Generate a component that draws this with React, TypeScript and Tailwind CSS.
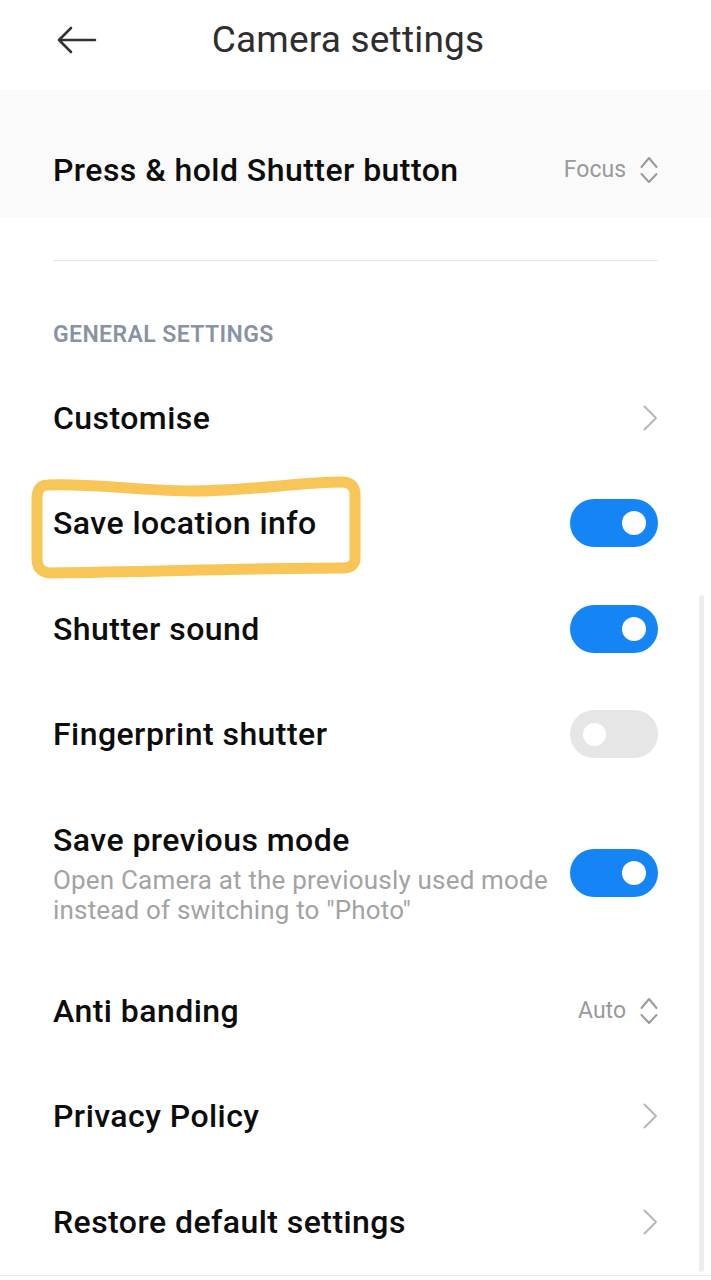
import React from "react";

const font = { fontFamily: "Roboto, 'Noto Sans', sans-serif" };

function Toggle({ on }: { on: boolean }) {
  return on ? (
    <div className="flex h-[48px] w-[88px] shrink-0 items-center justify-end rounded-full bg-[#1585f6] pr-[12px]">
      <div className="h-[24px] w-[24px] rounded-full bg-white" />
    </div>
  ) : (
    <div className="flex h-[48px] w-[88px] shrink-0 items-center justify-start rounded-full bg-[#e6e6e6] pl-[13px]">
      <div className="h-[23px] w-[23px] rounded-full bg-white" />
    </div>
  );
}

function ChevronRight() {
  return (
    <svg width="16" height="26" viewBox="0 0 16 26" className="shrink-0">
      <path d="M2.5 1.5 L14 13 L2.5 24.5" fill="none" stroke="#b8b8b8" strokeWidth="2" strokeLinecap="round" strokeLinejoin="round" />
    </svg>
  );
}

function UpDown() {
  return (
    <svg width="18" height="28" viewBox="0 0 18 28" className="shrink-0">
      <path d="M1.5 11 L9 2 L16.5 11" fill="none" stroke="#9a9a9a" strokeWidth="2" strokeLinecap="round" strokeLinejoin="round" />
      <path d="M1.5 18 L9 26 L16.5 18" fill="none" stroke="#9a9a9a" strokeWidth="2" strokeLinecap="round" strokeLinejoin="round" />
    </svg>
  );
}

function Label({ children }: { children: React.ReactNode }) {
  return <span className="text-[32px] font-medium leading-[40px] tracking-[0.45px] text-[#0d0d0d]">{children}</span>;
}

function Row({ label, children }: { label: string; children: React.ReactNode }) {
  return (
    <div className="flex h-[105.5px] items-center justify-between px-[53px]">
      <Label>{label}</Label>
      {children}
    </div>
  );
}

function Value({ text }: { text: string }) {
  return (
    <div className="flex items-center gap-[14px]">
      <span className="text-[23px] leading-[30px] text-[#9a9a9a]">{text}</span>
      <UpDown />
    </div>
  );
}

export default function App() {
  return (
    <div className="relative h-[1280px] w-full overflow-hidden bg-white" style={font}>
      {/* Header */}
      <div className="flex h-[90px] items-center pb-[10px] pl-[57px] pr-[53px]">
        <svg width="40" height="28" viewBox="0 0 40 28" className="shrink-0">
          <path d="M38 14 H2 M14 2 L2 14 L14 26" fill="none" stroke="#333" strokeWidth="2.6" strokeLinecap="round" strokeLinejoin="round" />
        </svg>
        <div className="flex-1 pr-[59px] text-center text-[37px] leading-[44px] tracking-[0.2px] text-[#2e2e2e]">Camera settings</div>
      </div>

      {/* Top band */}
      <div className="flex h-[127px] items-center justify-between bg-[#fafafa] px-[53px] pt-[33px]">
        <Label>Press &amp; hold Shutter button</Label>
        <Value text="Focus" />
      </div>

      <div className="mx-[53px] mt-[43px] h-px bg-[#e6e6e6]" />

      {/* Section header */}
      <div className="flex h-[104px] items-end px-[53px] pb-[17px]">
        <span className="text-[23px] font-semibold leading-[26px] tracking-[0.4px] text-[#8a92a6]">GENERAL SETTINGS</span>
      </div>

      <Row label="Customise">
        <ChevronRight />
      </Row>
      <Row label="Save location info">
        <Toggle on />
      </Row>
      <Row label="Shutter sound">
        <Toggle on />
      </Row>
      <Row label="Fingerprint shutter">
        <Toggle on={false} />
      </Row>

      <div className="flex h-[171px] items-center justify-between gap-[20px] px-[53px] py-[33px]">
        <div className="flex flex-col">
          <Label>Save previous mode</Label>
          <span className="mt-[5px] text-[26px] leading-[30px] tracking-[0.18px] text-[#a3a3a3]">
            <span className="block whitespace-nowrap">Open Camera at the previously used mode</span>
            <span className="block whitespace-nowrap">instead of switching to "Photo"</span>
          </span>
        </div>
        <Toggle on />
      </div>

      <Row label="Anti banding">
        <Value text="Auto" />
      </Row>
      <Row label="Privacy Policy">
        <ChevronRight />
      </Row>
      <Row label="Restore default settings">
        <ChevronRight />
      </Row>
      <div className="h-px bg-[#ececec]" />

      {/* Scrollbar */}
      <div className="absolute left-[699px] top-[595px] h-[677px] w-[5px] rounded-full bg-[#ededed]" />

      {/* Hand-drawn highlight */}
      <svg className="pointer-events-none absolute left-0 top-0" width="711" height="1280" viewBox="0 0 711 1280">
        <path
          d="M48 485 C 90 483, 130 490, 190 491 C 250 491, 300 482, 342 482 Q 355 482, 355 495 L 355 558 Q 355 568, 343 568 C 250 568, 150 572, 52 573 Q 37 573, 37 559 L 37 498 Q 37 485, 48 485 Z"
          fill="none"
          stroke="#f7c656"
          strokeWidth="11"
          strokeLinejoin="round"
        />
      </svg>
    </div>
  );
}
